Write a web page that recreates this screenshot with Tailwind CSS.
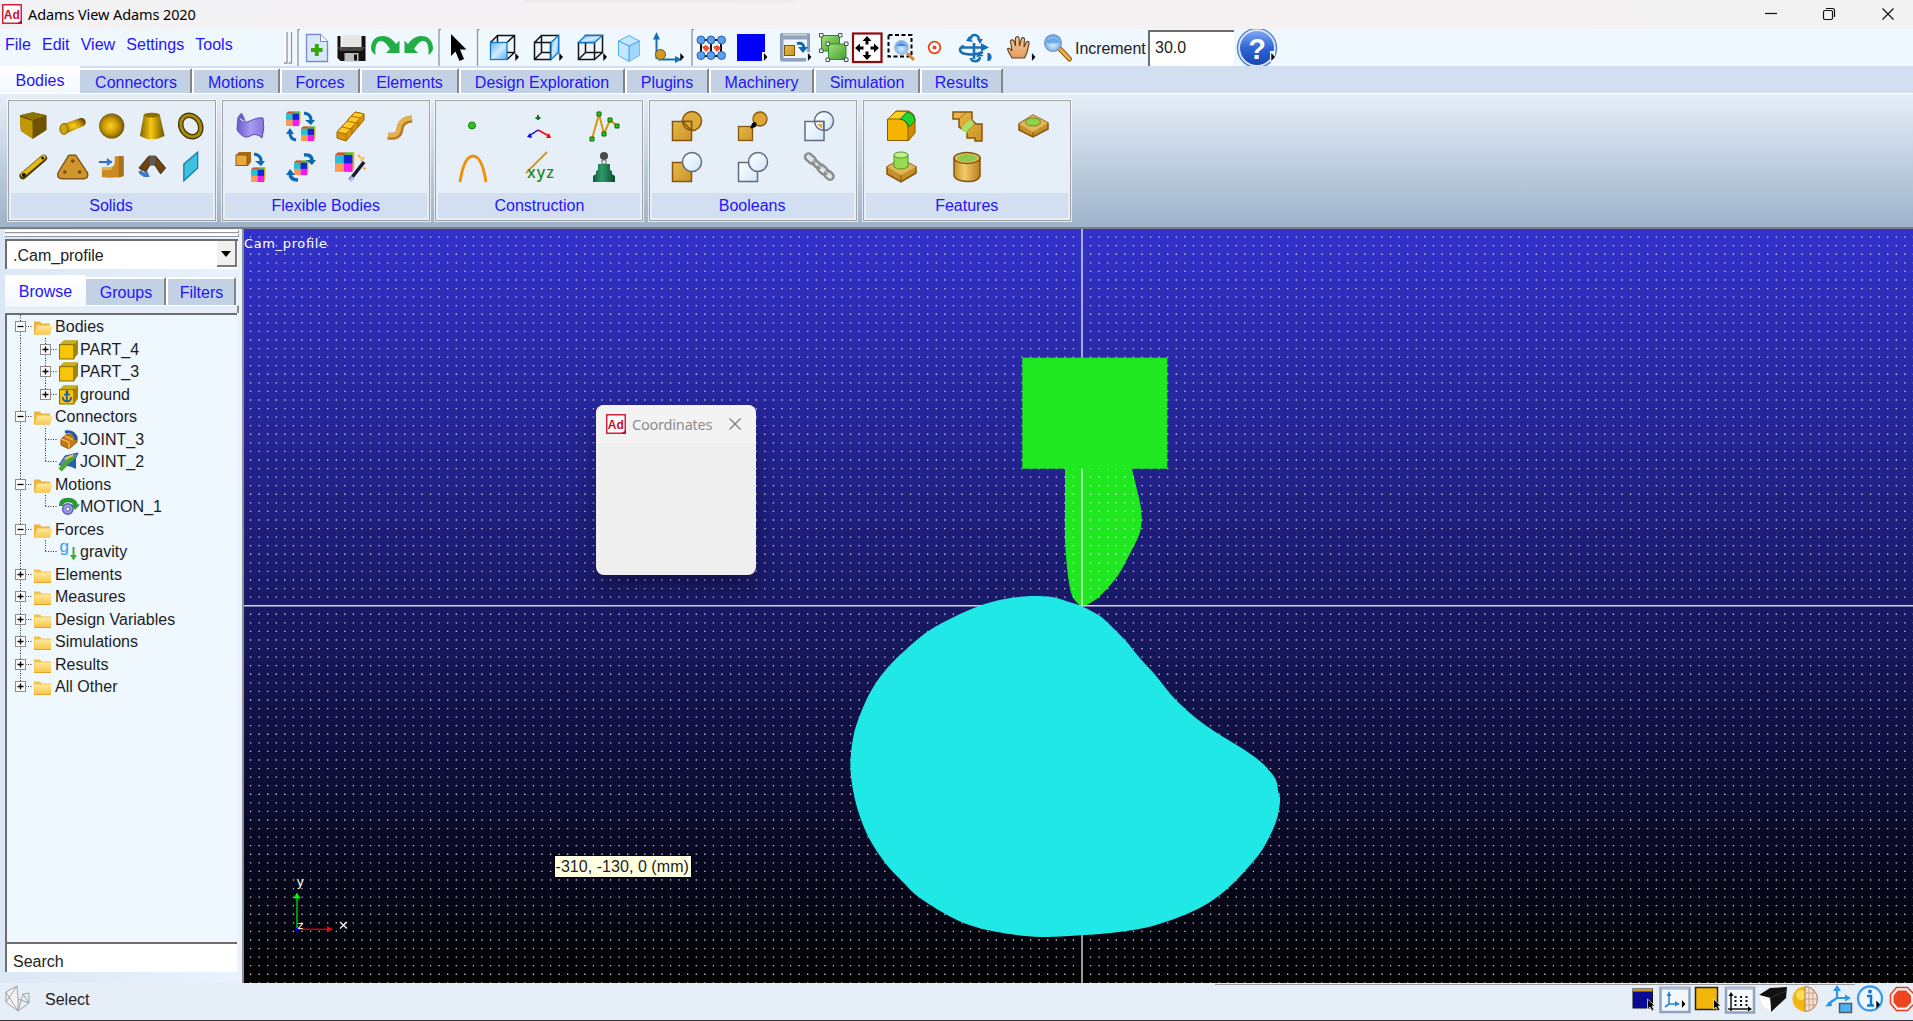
<!DOCTYPE html>
<html lang="en">
<head>
<meta charset="utf-8">
<title>Adams View Adams 2020</title>
<script src="https://cdn.jsdelivr.net/npm/@tailwindcss/browser@4"></script>
</head>
<body class="w-[1913px] h-[1021px] overflow-hidden flex flex-col bg-[#e6eef8] text-[16px] leading-[20px] text-black font-['Liberation_Sans',Arial,sans-serif]">

<!-- shared gradients and symbols -->
<svg class="absolute w-0 h-0" aria-hidden="true">
  <defs>
    <radialGradient id="gold" cx=".45" cy=".5" r=".6"><stop offset="0" stop-color="#ffd21a"/><stop offset=".5" stop-color="#c99a06"/><stop offset="1" stop-color="#5c4700"/></radialGradient>
    <linearGradient id="goldH"><stop offset="0" stop-color="#7d6000"/><stop offset=".45" stop-color="#f7c810"/><stop offset="1" stop-color="#6b5200"/></linearGradient>
    <linearGradient id="tan" x1="0" y1="0" x2="1" y2="1"><stop offset="0" stop-color="#e9b94a"/><stop offset="1" stop-color="#c99425"/></linearGradient>
    <linearGradient id="tanH"><stop offset="0" stop-color="#c98f2a"/><stop offset=".4" stop-color="#f0ca6a"/><stop offset="1" stop-color="#b97f1f"/></linearGradient>
    <linearGradient id="pale" x1="0" y1="0" x2="1" y2="1"><stop offset="0" stop-color="#fff"/><stop offset="1" stop-color="#cfe6fb"/></linearGradient>
    <linearGradient id="sky" x1="0" y1="0" x2="1" y2="1"><stop offset="0" stop-color="#5fb4f5"/><stop offset=".5" stop-color="#d3ecff"/><stop offset="1" stop-color="#5fb4f5"/></linearGradient>
    <linearGradient id="purple"><stop offset="0" stop-color="#6a5bc8"/><stop offset=".5" stop-color="#a79bf0"/><stop offset="1" stop-color="#8577dc"/></linearGradient>
    <linearGradient id="green" x1="0" y1="0" x2="1" y2="1"><stop offset="0" stop-color="#a6e07c"/><stop offset="1" stop-color="#3f9e2c"/></linearGradient>
    <linearGradient id="bottle"><stop offset="0" stop-color="#0c5a38"/><stop offset=".4" stop-color="#2f9a6a"/><stop offset="1" stop-color="#0a4a2e"/></linearGradient>
    <linearGradient id="help" x1="0" y1="0" x2="0" y2="1"><stop offset="0" stop-color="#7ea6f2"/><stop offset=".5" stop-color="#2f66d8"/><stop offset="1" stop-color="#1746ae"/></linearGradient>
    <radialGradient id="lens" cx=".5" cy=".6" r=".6"><stop offset="0" stop-color="#d8f0ff"/><stop offset="1" stop-color="#5f9fe8"/></radialGradient>
    <linearGradient id="skin" x1="0" y1="0" x2="0" y2="1"><stop offset="0" stop-color="#f7d2a4"/><stop offset="1" stop-color="#e09a5a"/></linearGradient>
    <linearGradient id="folderFill" x1="0" y1="0" x2="0" y2="1"><stop offset="0" stop-color="#ffe9a0"/><stop offset="1" stop-color="#f8c84a"/></linearGradient>
    <symbol id="adlogo" viewBox="0 0 20 20"><rect x=".75" y=".75" width="18.5" height="18.5" fill="#fff" stroke="#d0213f" stroke-width="1.5"/><path d="M14 20l6-4v4z" fill="#c8102e"/><text x="9.8" y="14.6" text-anchor="middle" font-family="Liberation Sans, sans-serif" font-weight="700" font-size="12" fill="#c8102e">Ad</text></symbol>
    <symbol id="folder" viewBox="0 0 20 16"><path d="M1 2h6l1.500 2H18v11H1z" fill="#f2c14a"/><path d="M1.500 5h16.500v9.500H1.500z" fill="url(#folderFill)"/><path d="M1 15h17" stroke="#e0a52e"/></symbol>
    <symbol id="folderOpen" viewBox="0 0 20 16"><path d="M1 2h6l1.500 2H17v11H1z" fill="#e9b440"/><path d="M4 6h16l-3 9H1.500z" fill="url(#folderFill)"/></symbol>
    <symbol id="plus" viewBox="0 0 11 11"><rect x=".5" y=".5" width="10" height="10" fill="#fdfdfd" stroke="#8c8c8c"/><path d="M2.500 5.500h6M5.500 2.500v6" stroke="#000" stroke-width="1.300"/></symbol>
    <symbol id="minus" viewBox="0 0 11 11"><rect x=".5" y=".5" width="10" height="10" fill="#fdfdfd" stroke="#8c8c8c"/><path d="M2.500 5.500h6" stroke="#000" stroke-width="1.300"/></symbol>
    <symbol id="cube" viewBox="0 0 20 20"><path d="M1 5l4-4h14v13l-4 5z" fill="#a88500"/><path d="M1 5l4-4h14l-4 4z" fill="#c9b018"/><rect x="1" y="5" width="14" height="14" fill="#f5c60a" stroke="#8d6a00"/></symbol>
    <symbol id="mesh" viewBox="0 0 16 16"><path d="M1 3l2-3h12.500v12l-2 3.500z" fill="#d4c020"/><rect x="0" y="2" width="7" height="7" fill="#26c2cf"/><rect x="7" y="2" width="7" height="7" fill="#1424d8"/><rect x="0" y="9" width="7" height="6.500" fill="#ff9a52"/><rect x="7" y="9" width="7" height="6.500" fill="#f21af0"/><path d="M0 2l2-2h7l-2 2z" fill="#e0453a"/><path d="M9 0h6l-1.500 2H7z" fill="#4ab83c"/></symbol>
    <symbol id="drop" viewBox="0 0 4 8"><path d="M.3 0v8L4 4z" fill="#000"/></symbol>
  </defs>
</svg>

<!-- title bar -->
<header class="h-[29px] shrink-0 flex items-center justify-between bg-linear-to-r from-[#f2f2f4] via-[#f5f1f2] to-[#f2f2f3] pb-px">
  <div class="flex items-center pl-[2px] gap-[6px]">
    <svg class="w-5 h-5"><use href="#adlogo"/></svg>
    <span class="font-['Noto_Sans',sans-serif] text-[14.500px] tracking-[-0.1px] whitespace-nowrap">Adams View Adams 2020</span>
  </div>
  <div class="w-[270px] h-[2px] self-start bg-[#e8e5e6] rounded-b-lg -ml-[270px] mr-[350px] blur-[1px]"></div>
  <svg class="w-[170px] h-7" viewBox="1743 0 170 28" fill="none" stroke="#111" stroke-width="1.200"><path d="M1765 13.500h12"/><rect x="1823.500" y="10.500" width="9" height="9" rx="1.500"/><path d="M1826 8.500h6.500q2 0 2 2V17"/><path d="M1882.500 8.500l11 11M1893.500 8.500l-11 11"/></svg>
</header>

<!-- menu and main toolbar -->
<div class="h-[37px] shrink-0 flex bg-[#eff7ff]">
  <nav class="w-[280px] flex gap-[11.200px] pl-[5px] pt-[6px] text-[#2414fb] whitespace-nowrap">
    <span>File</span><span>Edit</span><span>View</span><span>Settings</span><span>Tools</span>
  </nav>
  <svg class="w-[20px] h-[37px]" viewBox="280 29 20 37"><path d="M284.500 32h3v31h-3zM289.500 32h3v31h-3z" fill="#fff"/><path d="M287 32v31h-3M291.500 32v31h-3" stroke="#8f969c" fill="none" stroke-width="1.300"/><path d="M298 66V29.500h2" stroke="#8f969c" stroke-width="1.300" fill="none"/></svg>
  <!-- new -->
  <svg class="w-[34px] h-[37px]" viewBox="300 29 34 37"><path d="M306.500 34.500h14l7 7v20h-21z" fill="#d8e8fb" stroke="#7c87cc" stroke-width="1.300"/><path d="M320.500 34.500v7h7" fill="#fff" stroke="#7c87cc"/><path d="M316.800 44v12M311 50h11.500" stroke="#35a80d" stroke-width="4"/></svg>
  <!-- save -->
  <svg class="w-[34px] h-[37px]" viewBox="334 29 34 37"><path d="M337.500 36h3v12h21V36h4v25h-25l-3-3z" fill="#111"/><rect x="342" y="35" width="19" height="14" fill="#e6e6e6"/><path d="M338 47h27l-3 4h-22z" fill="#444"/><rect x="344.500" y="53" width="14" height="8.500" fill="#bdbdbd"/><rect x="354" y="54.500" width="3" height="6" fill="#111"/></svg>
  <!-- redo / undo -->
  <svg class="w-[34px] h-[37px]" viewBox="368 29 34 37"><path d="M371 47c1-8 6-11 12-11 6 0 10 4 13 8l3.500-3.500V53H386l4-4c-3-5-6-8-9-8-5 0-6 6-5.500 14-3-2-5-5-4.500-8z" fill="#22ad45"/></svg>
  <svg class="w-[36px] h-[37px]" viewBox="402 29 36 37"><path d="M433 47c-1-8-6-11-12-11-6 0-10 4-13 8l-3.500-3.500V53H418l-4-4c3-5 6-8 9-8 5 0 6 6 5.500 14 3-2 5-5 4.500-8z" fill="#22ad45"/></svg>
  <svg class="w-[42px] h-[37px]" viewBox="438 29 42 37"><path d="M439 66V29.500h2M477.500 66V29.500h2" stroke="#8f969c" stroke-width="1.300" fill="none"/><path d="M451 34l15.500 15.500h-6.500l4 9.500-4.500 2-4-9.500-4.500 4.500z" fill="#000"/></svg>
  <!-- view orientation cubes -->
  <svg class="w-[44px] h-[37px]" viewBox="480 29 44 37"><path d="M497.500 35.500h17v17h-17zM490.500 42.500l7-7M507 42.500l7.500-7M507 59.500l7.500-7M490.500 59.500l7-7" fill="none" stroke="#111" stroke-width="1.500"/><rect x="490.500" y="42.500" width="16.500" height="17" fill="url(#sky)" stroke="#1478c8" stroke-width="1.300"/><use href="#drop" x="515" y="53" width="4" height="8"/></svg>
  <svg class="w-[44px] h-[37px]" viewBox="524 29 44 37"><path d="M541.500 35.500h17v17h-17zM534.500 42.500h16v17h-16zM534.500 42.500l7-7M534.500 59.500l7-7" fill="none" stroke="#111" stroke-width="1.500"/><path d="M551 42.500l7.500-7v17l-7.500 7z" fill="url(#sky)" stroke="#1478c8" stroke-width="1.300"/><use href="#drop" x="559" y="53" width="4" height="8"/></svg>
  <svg class="w-[44px] h-[37px]" viewBox="568 29 44 37"><path d="M585.500 35.500h17v17h-17zM578.500 42.500h16v17h-16zM578.500 59.500l7-7M594.500 59.500l8-7" fill="none" stroke="#111" stroke-width="1.500"/><path d="M578.500 42.500l7-7h17l-8 7z" fill="url(#sky)" stroke="#1478c8" stroke-width="1.300"/><use href="#drop" x="603" y="53" width="4" height="8"/></svg>
  <svg class="w-[36px] h-[37px]" viewBox="612 29 36 37"><path d="M629 35.500l10.500 5.500v14.500l-10.500 6-10.500-6V41z" fill="#c4e6ff" stroke="#4eb0f0"/><path d="M629 46l10.500-5v14.500l-10.500 6z" fill="#9ad2fb" opacity=".8"/><path d="M618.500 41l10.500 5 10.500-5M629 46v15" fill="none" stroke="#2f9ce8"/></svg>
  <svg class="w-[40px] h-[37px]" viewBox="648 29 40 37"><path d="M656.500 59V37M658 59.500h20" stroke="#1470b8" stroke-width="2" fill="none"/><path d="M653 39.500l3.500-7.500 3.500 7.500zM675 56l7 3.500-7 3.500z" fill="#1470b8"/><circle cx="660.500" cy="54.500" r="5" fill="#d19a25" stroke="#7a5510"/><use href="#drop" x="680" y="53" width="4" height="8"/></svg>
  <!-- working grid -->
  <svg class="w-[46px] h-[37px]" viewBox="688 29 46 37"><path d="M692 66V29.500h2" stroke="#8f969c" stroke-width="1.300" fill="none"/><path d="M701 40h20M701 56h20M701 40v16M711 40v16M721 40v16" stroke="#111" stroke-width="2" /><g fill="#5b9ff0" stroke="#2460b0"><circle cx="701" cy="40" r="4"/><circle cx="711" cy="40" r="4"/><circle cx="721.500" cy="40" r="4"/><circle cx="701" cy="55.500" r="4"/><circle cx="711" cy="55.500" r="4"/><circle cx="721.500" cy="55.500" r="4"/></g><path d="M702 47l4-2 4 3-4 4zM713 47l4-2 4 3-4 4z" fill="#f4502a"/></svg>
  <svg class="w-[40px] h-[37px]" viewBox="734 29 40 37"><rect x="737" y="34" width="28" height="27" fill="#00f"/><path d="M762 52h5v10h-5z" fill="#eff7ff"/><use href="#drop" x="763.500" y="53" width="4" height="8"/></svg>
  <svg class="w-[42px] h-[37px]" viewBox="774 29 42 37"><rect x="780.500" y="33.500" width="29" height="27.500" rx="1.500" fill="#8fa3be" stroke="#8496b0"/><path d="M783 34.500h24" stroke="#c8d4e4" stroke-width="2"/><rect x="783.500" y="39.500" width="23.500" height="18.500" fill="#f2f6fa"/><rect x="784.500" y="45.500" width="10" height="10" fill="url(#tan)" stroke="#7a5510"/><path d="M797 43.500c5-1 7 1 7 5" stroke="#0f68b0" stroke-width="3" fill="none"/><path d="M798 47h10l-5 6z" fill="#0f68b0"/><path d="M806 52h5v10h-5z" fill="#eff7ff"/><use href="#drop" x="807.500" y="53" width="4" height="8"/></svg>
  <svg class="w-[34px] h-[37px]" viewBox="816 29 34 37"><rect x="821.500" y="35.500" width="18" height="15.500" fill="url(#green)" stroke="#2f8a22"/><rect x="828.500" y="44" width="17.500" height="15.500" fill="url(#green)" stroke="#2f8a22"/><g fill="#fff" stroke="#4a5058"><path d="M819.500 33.500h3.500v3.500h-3.500zM838.500 33.500h3.500v3.500h-3.500zM819.500 49h3.500v3.500h-3.500zM826 42h3.500v3.500h-3.500zM844.500 42h3.500v3.500h-3.500zM826 58h3.500v3.500h-3.500zM844.500 58h3.500v3.500h-3.500z"/></g></svg>
  <svg class="w-[34px] h-[37px]" viewBox="850 29 34 37"><rect x="853" y="33.500" width="28.500" height="28.500" fill="#fff" stroke="#900a0a" stroke-width="2.200"/><path d="M867 39v5.500M867 51.500v5.500M858 48h5.500M870.500 48h5.500" stroke="#000" stroke-width="3"/><path d="M862.500 41l4.500-5 4.500 5zM862.500 55l4.500 5 4.500-5zM860 43.500l-5 4.500 5 4.500zM874 43.500l5 4.500-5 4.500z" fill="#000"/></svg>
  <!-- zoom box -->
  <svg class="w-[36px] h-[37px]" viewBox="884 29 36 37"><rect x="888.500" y="35" width="23" height="21.500" fill="none" stroke="#000" stroke-width="2" stroke-dasharray="4 2.500"/><path d="M907 53l7 7" stroke="#d08a2a" stroke-width="3"/><circle cx="901.500" cy="47.500" r="6.800" fill="url(#lens)" stroke="#a8bcd4" stroke-width="1.300"/><path d="M896 46q5-5 11 0z" fill="#3f87e8"/></svg>
  <svg class="w-[32px] h-[37px]" viewBox="920 29 32 37"><circle cx="934.500" cy="47.500" r="5.800" fill="#fff" stroke="#f04018" stroke-width="1.800"/><circle cx="934.500" cy="47.500" r="2" fill="#f04018"/></svg>
  <svg class="w-[48px] h-[37px]" viewBox="952 29 48 37" fill="none" stroke="#1a6fb4" stroke-width="2.600"><path d="M964 46c-6 2-5 7 2 8 6 1 13 0 17-2M962 47.500h21M974 43v16M971 39c-1-5 8-6 8 1M971 58c0 4 8 5 9-1"/><path d="M981 43l8 4.500-8 4zM969 36l-3 5 7 1zM977 39l3 5 3-5zM979 53l-3 4 8-1z" fill="#1a6fb4" stroke="none"/><use href="#drop" x="987.500" y="53" width="4" height="8"/></svg>
  <svg class="w-[40px] h-[37px]" viewBox="1000 29 40 37"><path d="M1012 58c-2-4-4-6-4.500-9 1.500-1.500 3 0 4.500 2l-1.500-10c1-2 3-1 3.500 0l1.500 5 0-8c1-2 3-1.500 3.500 0l.5 8 2-7.500c1-1.500 3-1 3 .5l-.5 8 2.500-5c1-1 3-.5 2.500 1.500l-2 9-2.500 5.500z" fill="url(#skin)" stroke="#6a4420" stroke-width="1.200"/><use href="#drop" x="1031.500" y="53" width="4" height="8"/></svg>
  <svg class="w-[34px] h-[37px]" viewBox="1040 29 34 37"><path d="M1060 49l9.500 10" stroke="#8a5a20" stroke-width="5" stroke-linecap="round"/><path d="M1060.500 49.500l9 9.500" stroke="#f0b040" stroke-width="3" stroke-linecap="round"/><circle cx="1053" cy="43" r="8.300" fill="url(#lens)" stroke="#7d9fc4" stroke-width="1.600"/><path d="M1046 42q7-7 14 0-7 3-14 0z" fill="#3f87e8" opacity=".55"/></svg>
  <span class="w-[74px] pt-[9.500px] pl-px text-[#222] whitespace-nowrap tracking-[-0.05px]">Increment</span>
  <div class="w-[86px] h-[35.500px] mt-px bg-white border-t-2 border-l-2 border-[#6d6d6d] pl-[5px] pt-[6px] text-[#222]">30.0</div>
  <svg class="w-[50px] h-[37px]" viewBox="1234 29 50 37"><circle cx="1257" cy="48" r="19.500" fill="#dfe9fb" stroke="#5b82cc" stroke-width="1.500"/><circle cx="1257" cy="48" r="17" fill="url(#help)"/><text x="1257" y="58.500" text-anchor="middle" font-family="Liberation Sans, sans-serif" font-weight="700" font-size="29" fill="#fff">?</text><path d="M1270 51h5v11h-5z" fill="#eff7ff"/><use href="#drop" x="1271" y="53" width="4" height="8"/></svg>
</div>

<!-- ribbon tabs -->
<nav class="h-[28px] shrink-0 flex items-end bg-[#d1dff0] border-b border-white text-[#2414fb] text-center whitespace-nowrap">
  <div class="w-20 h-full bg-linear-to-b from-white to-[#f4f8ff] leading-[30px]">Bodies</div>
  <div class="w-[112px] h-[25px] bg-[#c2d1e3] border-t-2 border-white border-r-2 border-r-[#858585] leading-[25px] pl-[2px]">Connectors</div>
  <div class="w-[88px] h-[25px] bg-[#c2d1e3] border-t-2 border-l-2 border-white border-r-2 border-r-[#858585] leading-[25px]">Motions</div>
  <div class="w-[80px] h-[25px] bg-[#c2d1e3] border-t-2 border-l-2 border-white border-r-2 border-r-[#858585] leading-[25px]">Forces</div>
  <div class="w-[99px] h-[25px] bg-[#c2d1e3] border-t-2 border-l-2 border-white border-r-2 border-r-[#858585] leading-[25px]">Elements</div>
  <div class="w-[166px] h-[25px] bg-[#c2d1e3] border-t-2 border-l-2 border-white border-r-2 border-r-[#858585] leading-[25px]">Design Exploration</div>
  <div class="w-[84px] h-[25px] bg-[#c2d1e3] border-t-2 border-l-2 border-white border-r-2 border-r-[#858585] leading-[25px]">Plugins</div>
  <div class="w-[105px] h-[25px] bg-[#c2d1e3] border-t-2 border-l-2 border-white border-r-2 border-r-[#858585] leading-[25px]">Machinery</div>
  <div class="w-[106px] h-[25px] bg-[#c2d1e3] border-t-2 border-l-2 border-white border-r-2 border-r-[#858585] leading-[25px]">Simulation</div>
  <div class="w-[83px] h-[25px] bg-[#c2d1e3] border-t-2 border-l-2 border-white border-r-2 border-r-[#858585] leading-[25px]">Results</div>
</nav>

<!-- ribbon -->
<section class="h-[135px] shrink-0 flex gap-[5.700px] pl-[8px] pt-[6px] bg-linear-to-b from-[#e6eef8] to-[#9db3cb] border-b-2 border-[#7d7d7d] text-[#2414fb]">
  <div class="w-[208px] h-[121px] border border-[#a3a3a3] outline outline-white/70 bg-[#e6eef8] px-[2px] pb-[2px] flex flex-col justify-between">
    <div class="grid grid-cols-[repeat(5,39.500px)] auto-rows-[41px] pl-[2px] pt-[5px]">
      <svg class="w-[39.500px] h-10" viewBox="-20 -20 40 40"><path d="M-13-11L0-14l14 3v15L0 13-12 5z" fill="#6a5200"/><path d="M-13-9L0-5v18L-12 5z" fill="#c09804"/><path d="M0-5l13-4-1 14L0 13z" fill="#6e5400"/><path d="M-13-11L0-14l14 3L0-6z" fill="#8e7206"/></svg>
      <svg class="w-[39.500px] h-10" viewBox="-20 -20 40 40"><path d="M-10-2l18-6c5-1 7 6 3 8L-8 8z" fill="url(#gold)"/><ellipse cx="-9" cy="3" rx="4" ry="5.500" fill="#d0a80e" stroke="#7d6000"/></svg>
      <svg class="w-[39.500px] h-10" viewBox="-20 -20 40 40"><circle r="12.500" fill="url(#gold)" stroke="#6b5200" stroke-width=".6"/></svg>
      <svg class="w-[39.500px] h-10" viewBox="-20 -20 40 40"><path d="M-8-12Q0-15 8-12l5 22Q0 17-12 10z" fill="url(#goldH)"/><ellipse cy="-11" rx="8" ry="2.500" fill="#8e7000"/></svg>
      <svg class="w-[39.500px] h-10" viewBox="-20 -20 40 40"><ellipse rx="9.500" ry="11.500" transform="rotate(-35)" fill="none" stroke="#3f3200" stroke-width="5.500"/><ellipse rx="9.500" ry="11.500" transform="rotate(-35)" fill="none" stroke="#a98a0c" stroke-width="3"/></svg>
      <svg class="w-[39.500px] h-10" viewBox="-20 -20 40 40"><path d="M-10 9L11-9" stroke="#4a3a00" stroke-width="7" stroke-linecap="round"/><path d="M-10 8L11-10" stroke="#e6b812" stroke-width="4.500" stroke-linecap="round"/><circle cx="-9" cy="8" r="2" fill="#111"/><circle cx="10" cy="-9" r="1.500" fill="#111"/></svg>
      <svg class="w-[39.500px] h-10" viewBox="-20 -20 40 40"><path d="M-4-12h7l12 18q1 6-4 6h-22q-5 0-4-6z" fill="#d0962c" stroke="#7e5818" stroke-width="1.500"/><g fill="#6e4a10"><circle cy="-6" r="1.800"/><circle cx="-8" cy="5" r="1.800"/><circle cx="7" cy="5" r="1.800"/></g></svg>
      <svg class="w-[39.500px] h-10" viewBox="-20 -20 40 40"><path d="M-10 0h9q4 0 4-6v-5h9V9q-10 3-22 1z" fill="#c98a22"/><path d="M7-11h5V9l-5 2z" fill="#a8701a"/><path d="M-10 0h11l-2 3h-9z" fill="#e7b048"/><path d="M-13-5H0" stroke="#2c66b4" stroke-width="2"/><path d="M-5-9l6 4-6 4z" fill="#3a78c8"/></svg>
      <svg class="w-[39.500px] h-10" viewBox="-20 -20 40 40"><path d="M-3-11h7L14 1l-5 6-6-9h-5l-4 7-7-4z" fill="#6b4412" stroke="#45290a"/><path d="M-3-11h7l-1 9h-5z" fill="#5b5a58"/><path d="M-12 4q2 5 8 3" stroke="#3a78c8" stroke-width="3.500" fill="none"/><path d="M-5 3l3 7-7 0z" fill="#3a78c8"/></svg>
      <svg class="w-[39.500px] h-10" viewBox="-20 -20 40 40"><path d="M-7-3L7-15V1L-7 14z" fill="#3fc0e0" stroke="#0c7fae" stroke-width="1.300"/></svg>
    </div>
    <div class="h-[25px] bg-[#d2dff0] text-center leading-[26px] pr-[2px]">Solids</div>
  </div>

  <div class="w-[208px] h-[121px] border border-[#a3a3a3] outline outline-white/70 bg-[#e6eef8] px-[2px] pb-[2px] flex flex-col justify-between">
    <div class="grid grid-cols-[repeat(4,49px)] auto-rows-[41px] pl-[3px] pt-[5px]">
      <svg class="w-[49px] h-10" viewBox="-22 -20 49 40"><path d="M-12-9q4 8 12 4t13-3q2 10-1 20-6-6-12-2T-13 4z" fill="url(#purple)" stroke="#5a4ab8"/><path d="M-12-9q2-4 4-4 3 6 4 9z" fill="#6a5bc8"/></svg>
      <svg class="w-[49px] h-10" viewBox="-24 -20 49 40"><use href="#mesh" x="-15" y="-15" width="15" height="16"/><use href="#mesh" x="0" y="0" width="15" height="16"/><path d="M3-13q7 1 7 7M-5 14q-6-1-6-7" fill="none" stroke="#0a68b8" stroke-width="3"/><path d="M4-6h10l-4 5zM-15 8h8l-4-6z" fill="#0a68b8"/></svg>
      <svg class="w-[49px] h-10" viewBox="-25 -20 49 40"><path d="M-14 6L4-14l9 2v6L-5 15l-9-3z" fill="#d99408" stroke="#9c6200"/><path d="M-14 6L4-14l9 2L-5 8z" fill="#ffc928" stroke="#a86e00"/><path d="M-9 1l9 2M-4-5l9 2M0-10l9 2M-5 8v6M1 2v6M7-5v6" stroke="#a86e00" fill="none"/></svg>
      <svg class="w-[49px] h-10" viewBox="-26 -20 49 40"><path d="M-13 10Q-2 12-1 3T11-7" fill="none" stroke="#b07a1e" stroke-width="7"/><path d="M-13 9Q-3 11-2 2T11-8" fill="none" stroke="#e6b04c" stroke-width="4.500"/></svg>
      <svg class="w-[49px] h-10" viewBox="-22 -20 49 40"><path d="M-14-12l3-3H1V-5l-3 4h-12z" fill="#a86a10"/><rect x="-14" y="-12" width="11" height="10.500" fill="#e7a93a" stroke="#8d5a10"/><use href="#mesh" x="1" y="0" width="15" height="16"/><path d="M4-13q7 1 7 7" fill="none" stroke="#0a68b8" stroke-width="3"/><path d="M5-6h10l-4 5z" fill="#0a68b8"/></svg>
      <svg class="w-[49px] h-10" viewBox="-24 -20 49 40"><use href="#mesh" x="-7" y="-7" width="15" height="16"/><path d="M3-12q8-1 8 6M-3 13q-8 0-8-7" fill="none" stroke="#0a68b8" stroke-width="3.500"/><path d="M5-7h10l-4 5zM-15 8h9l-5-6z" fill="#0a68b8"/></svg>
      <svg class="w-[49px] h-10" viewBox="-25 -20 49 40"><use href="#mesh" x="-16" y="-15" width="20" height="21"/><path d="M-1 13L13-5" stroke="#1a1a2c" stroke-width="3.500"/><path d="M-1 14l3-4" stroke="#b8bce8" stroke-width="3.500"/><path d="M7-12l3 3M13-10l-3 4M12 1l3 1" stroke="#ffb428" stroke-width="2"/></svg>
    </div>
    <div class="h-[25px] bg-[#d2dff0] text-center leading-[26px]">Flexible Bodies</div>
  </div>

  <div class="w-[208px] h-[121px] border border-[#a3a3a3] outline outline-white/70 bg-[#e6eef8] px-[2px] pb-[2px] flex flex-col justify-between">
    <div class="grid grid-cols-[repeat(3,66px)] auto-rows-[41px] pl-[1px] pt-[5px]">
      <svg class="w-[66px] h-10" viewBox="-33 -20 66 40"><circle cx="0" cy="-.5" r="3.500" fill="#2cc41c" stroke="#0c7a0c"/></svg>
      <svg class="w-[66px] h-10" viewBox="-33 -20 66 40"><path d="M0-11v5M-2.500-8h5" stroke="#0a7a1c" stroke-width="2"/><path d="M0 4l11 6" stroke="#f00" stroke-width="1.500"/><path d="M0 4l-9 6" stroke="#00f" stroke-width="1.500"/><path d="M13 12l-5 0 3-5z" fill="#f00"/><path d="M-11 11l5 1-2-5z" fill="#00f"/></svg>
      <svg class="w-[66px] h-10" viewBox="-33 -20 66 40"><path d="M-12 13L-5-12 0 8l6-14 7 6" fill="none" stroke="#d39a10" stroke-width="2"/><g fill="#2cc41c" stroke="#0c6a0c"><path d="M-14 11h4v4h-4zM-7-14h4v4h-4zM-2 6h4v4h-4zM4-8h4v4h-4zM11-2h4v4h-4z"/></g></svg>
      <svg class="w-[66px] h-10" viewBox="-33 -20 66 40"><path d="M-12 15Q-8-11 1-11 10-11 14 15" fill="none" stroke="#f09208" stroke-width="3"/></svg>
      <svg class="w-[66px] h-10" viewBox="-33 -20 66 40"><path d="M-12 6L9-15" stroke="#d39a10" stroke-width="2"/><text x="-11" y="11" font-family="Noto Sans, sans-serif" font-size="16" font-weight="500" fill="#1f8a1f" textLength="27">xyz</text></svg>
      <svg class="w-[66px] h-10" viewBox="-33 -20 66 40"><circle cy="-11" r="4" fill="#4a4a4a"/><path d="M-2-7h4v4h-4z" fill="#eee" stroke="#666"/><path d="M-6-3H6v6l2 1v3l3 2v6h-22V9l3-2V4l2-1z" fill="url(#bottle)"/></svg>
    </div>
    <div class="h-[25px] bg-[#d2dff0] text-center leading-[26px]">Construction</div>
  </div>

  <div class="w-[208px] h-[121px] border border-[#a3a3a3] outline outline-white/70 bg-[#e6eef8] px-[2px] pb-[2px] flex flex-col justify-between">
    <div class="grid grid-cols-[repeat(3,66px)] auto-rows-[41px] pl-[2px] pt-[5px]">
      <svg class="w-[66px] h-10" viewBox="-33 -20 66 40" stroke="#86560e" stroke-width="1.500"><circle cx="5" cy="-5" r="9.500" fill="#e0aa3a"/><rect x="-14.500" y="-4.500" width="19" height="19" fill="url(#tan)"/><path d="M-4.500-4.500a9.500 9.500 0 0 0 9 9z M-4.500-4.500h9v9" fill="#e0aa3a"/></svg>
      <svg class="w-[66px] h-10" viewBox="-33 -20 66 40" stroke="#86560e" stroke-width="1.300"><circle cx="7" cy="-7" r="7" fill="#dda535"/><rect x="-14.500" y=".5" width="14" height="14" fill="url(#tan)"/><path d="M-2 2l5-5" stroke="#000" stroke-width="2.500"/><circle cx="1" cy="-1" r="1.800" fill="#000" stroke="#000"/></svg>
      <svg class="w-[66px] h-10" viewBox="-33 -20 66 40" stroke="#606c7c" stroke-width="1.500"><circle cx="5" cy="-5" r="9.500" fill="url(#pale)"/><rect x="-14" y="-4.500" width="19" height="19" fill="url(#pale)"/><path d="M-4.500-4.500h9v9a9.500 9.500 0 0 1-9-9z" fill="#fff"/><path d="M-2-2h5v5z" fill="#e8a830" stroke="none"/></svg>
      <svg class="w-[66px] h-10" viewBox="-33 -20 66 40"><rect x="-14.500" y="-4.500" width="19" height="19" fill="url(#tan)" stroke="#86560e" stroke-width="1.500"/><circle cx="5" cy="-5" r="9.500" fill="url(#pale)" stroke="#606c7c" stroke-width="1.500"/></svg>
      <svg class="w-[66px] h-10" viewBox="-33 -20 66 40" stroke="#606c7c" stroke-width="1.500"><rect x="-14.500" y="-4.500" width="19" height="19" fill="url(#pale)"/><circle cx="5" cy="-5" r="9.500" fill="url(#pale)"/></svg>
      <svg class="w-[66px] h-10" viewBox="-33 -20 66 40" fill="none" stroke="#8d8d8d" stroke-width="2.500"><g transform="rotate(42)"><rect x="-18" y="-4" width="12" height="7" rx="3.500"/><rect x="-8" y="-3" width="9" height="5" rx="2.500"/><rect x="-1" y="-4" width="11" height="7" rx="3.500"/><rect x="8" y="-4" width="10" height="7" rx="3.500"/><path d="M-16-1h32" stroke="#d6d6d6" stroke-width="1"/></g></svg>
    </div>
    <div class="h-[25px] bg-[#d2dff0] text-center leading-[26px] pr-[2px]">Booleans</div>
  </div>

  <div class="w-[208px] h-[121px] border border-[#a3a3a3] outline outline-white/70 bg-[#e6eef8] px-[2px] pb-[2px] flex flex-col justify-between">
    <div class="grid grid-cols-[repeat(3,66px)] auto-rows-[41px] pl-[2px] pt-[5px]">
      <svg class="w-[66px] h-10" viewBox="-33 -20 66 40"><path d="M-13-7l8-8H8q6 3 6 8V7l-7 8z" fill="#d08c00" stroke="#8a5a00"/><path d="M-13-7l8-7H6L-1-7z" fill="#ffd21a"/><path d="M-13.500-7H-1Q7-6 7 4v10.500h-20.500z" fill="#f5b400" stroke="#8a5a00"/><path d="M-1-7l7-7q8 2 8 9L8 1Q6-6-1-7z" fill="#22d431" stroke="#0f7a18"/></svg>
      <svg class="w-[66px] h-10" viewBox="-33 -20 66 40"><path d="M-14-14H5v8l4 4h6v17H8v-3H0V6L-8 1v-8h-6z" fill="url(#tan)" stroke="#86560e" stroke-width="1.500"/><path d="M-6 2L4-7l4 6L-1 8z" fill="#a6e264"/><path d="M-8-7l8-7M0 6l8-8" stroke="#a87418"/></svg>
      <svg class="w-[66px] h-10" viewBox="-33 -20 66 40"><path d="M-14-2L0-11 15-3v6L0 11-14 4z" fill="#c58f2c" stroke="#86560e" stroke-width="1.500"/><path d="M-14-2L0-11 15-3 0 6z" fill="#e2b658"/><path d="M0 6v5" stroke="#86560e"/><ellipse cx="0" cy="-4" rx="7.500" ry="4" fill="#8ed448" stroke="#6e8a20"/></svg>
      <svg class="w-[66px] h-10" viewBox="-33 -20 66 40"><path d="M-14 0L0-8 15 0v6L0 15-14 7z" fill="#c58f2c" stroke="#86560e" stroke-width="1.500"/><path d="M-14 0L0-8 15 0 0 8z" fill="#e2b658"/><path d="M0 8v7" stroke="#86560e"/><path d="M-7-12v12q7 4 14 0v-12z" fill="#96dc50" stroke="#4f9a20"/><ellipse cy="-12" rx="7" ry="3" fill="#c2f08c" stroke="#4f9a20"/></svg>
      <svg class="w-[66px] h-10" viewBox="-33 -20 66 40"><path d="M-13-9V9q2 5 13 5.500T13 9V-9z" fill="url(#tanH)" stroke="#86560e" stroke-width="1.500"/><ellipse cy="-9" rx="13" ry="5.500" fill="#e8c060" stroke="#86560e" stroke-width="1.500"/><ellipse cy="-9" rx="10" ry="3.800" fill="#8fc84a"/></svg>
    </div>
    <div class="h-[25px] bg-[#d2dff0] text-center leading-[26px]">Features</div>
  </div>
</section>

<!-- main area -->
<main class="h-[754px] shrink-0 flex">
  <aside class="w-[244px] h-full flex flex-col bg-linear-to-r from-[#dce7f5] to-[#e9f3ff] border-r-2 border-[#8d8d8d] pl-[5px]">
    <div class="w-[234px] h-[10px] flex flex-col gap-px pt-px">
      <div class="h-[3px] bg-white border-r border-b border-[#8f969c]"></div>
      <div class="h-[3px] bg-white border-r border-b border-[#8f969c]"></div>
    </div>
    <div class="w-[233px] h-[30px] shrink-0 bg-white border-t-2 border-l-2 border-[#6d6d6d] flex justify-between pl-[6px] text-[#222] leading-[29px]">
      <span>.Cam_profile</span>
      <div class="w-[20px] h-[26px] bg-[#f0f0f0] border-r-2 border-b-2 border-[#7a7a7a] flex justify-center pt-[10px] mr-px"><svg class="w-[10px] h-[6px]" viewBox="0 0 10 6"><path d="M0 0h10L5 6z"/></svg></div>
    </div>
    <div class="w-[233px] h-[36px] shrink-0 flex items-end text-[#2414fb] text-center">
      <div class="w-[81px] h-[30px] bg-linear-to-b from-white to-[#f4f8ff] leading-[33px]">Browse</div>
      <div class="w-[80px] h-[28px] bg-[#c2d1e3] border-t-2 border-white border-r-2 border-r-[#858585] leading-[28px] pl-[2px]">Groups</div>
      <div class="w-[70px] h-[28px] bg-[#c2d1e3] border-t-2 border-l-2 border-white border-r-2 border-r-[#858585] leading-[28px] pl-px">Filters</div>
    </div>
    <div class="w-[234px] h-[8px] shrink-0 border-t border-white border-r-2 border-r-[#8d8d8d] bg-[#e6eef8]"></div>
    <div id="tree" class="w-[232px] h-[629px] shrink-0 bg-[#eff7ff] border-t-2 border-l-2 border-[#6d6d6d] text-[#1d1d1d] overflow-hidden"></div>
    <div class="w-[232px] h-[30px] shrink-0 bg-white border-t-2 border-l-2 border-[#6d6d6d] pl-[6px] pt-[2px] leading-[32px] text-[#222]">Search</div>
  </aside>

  <div class="relative w-[1669px] h-full overflow-hidden">
    <svg class="w-[1669px] h-[754px]" viewBox="244 229 1669 754">
      <defs><linearGradient id="sceneBg" x1="0" y1="0" x2="0" y2="1"><stop offset="0" stop-color="#3232cc"/><stop offset="1" stop-color="#000"/></linearGradient></defs>
      <rect x="244" y="229" width="1669" height="754" fill="url(#sceneBg)"/>
      <path id="follower" transform="translate(1000 340) scale(.33333)" fill="#20e820"/>
      <path id="gridDots" fill="#fff" fill-opacity=".78"/>
      <path d="M244 605.700h1669M1082 229v754" stroke="#fff" stroke-opacity=".8" stroke-width="1.500" fill="none"/>
      <rect x="1022.300" y="357.700" width="145" height="111" fill="#20e820"/>
      <path id="cam" transform="translate(840 560) scale(.33333)" fill="#20e8e6"/>
      <!-- triad -->
      <path d="M297 929V897" stroke="#00c000" stroke-width="1.500"/><path d="M293.500 898.500l3.500-6 3.500 6z" fill="#0f0"/>
      <path d="M297 929.300h31" stroke="#d00000" stroke-width="1.500"/><path d="M327 926l6 3.300-6 2.700z" fill="#f00"/><rect x="295.500" y="928" width="3" height="3" fill="#00f"/>
      <path d="M340 922l7 6.500M347 922l-7 6.500" stroke="#fff" stroke-width="1.200"/>
      <g fill="#fff" font-family="DejaVu Sans, sans-serif" font-size="13"><text x="296.500" y="886">y</text><text x="297.500" y="928.500" font-size="11">z</text><text x="244" y="248" textLength="83">Cam_profile</text></g>
    </svg>

    <div class="absolute left-[352px] top-[176px] w-[160px] h-[170px] rounded-[8px] bg-[#efefef] overflow-hidden shadow-[0_14px_24px_rgba(0,0,0,.3)]">
      <div class="h-[38px] bg-[#f3f3f3] flex items-center pl-[10px]">
        <svg class="w-5 h-5"><use href="#adlogo"/></svg>
        <span class="w-[90px] pl-[6px] pb-px font-['Noto_Sans',sans-serif] text-[14.500px] text-[#8c8c8c] tracking-[-0.2px]">Coordinates</span>
        <svg class="ml-[13px] w-[12px] h-[12px]" viewBox="0 0 12 12"><path d="M.5.5l11 11M11.500.5l-11 11" stroke="#777" stroke-width="1.100"/></svg>
      </div>
    </div>
    <div class="absolute left-[309.500px] top-[626px] w-[138px] h-[23px] bg-[#ffffe1] border border-black pl-px text-[#222] leading-[22px] tracking-[0.05px] whitespace-nowrap">-310, -130, 0 (mm)</div>
  </div>
</main>

<!-- status bar -->
<footer class="grow flex justify-between bg-[#e6eef8] border-b border-[#333] text-[#222]">
  <div class="flex items-start pl-[5px]">
    <svg class="w-[26px] h-[30px] mt-[2px]" viewBox="5 985 26 30" fill="#f4f4f4" stroke="#9a9a9a" stroke-width=".9"><path d="M6 992l11-6 1 13v12L6 1002z"/><path d="M18 1011l11-8V993l-6 1-5 17M6 992l12 19M6 1002l11-16M18 999l11 4M23 994l6 9" fill="none"/></svg>
    <span class="pt-[7px] pl-[14px]">Select</span>
  </div>
  <svg class="w-[713px] h-[37px]" viewBox="1200 983 713 37">
    <path d="M1215 984.500h640" stroke="#9a9a9a"/>
    <rect x="1633" y="989" width="19.500" height="19" fill="#0a0a96" stroke="#111"/><rect x="1633" y="989" width="19.500" height="2.500" fill="#d09a10"/><path d="M1647.500 999v10l2.500-2 2 4 2-1-2-4h3z" fill="#000" stroke="#fff" stroke-width=".7"/>
    <rect x="1660.500" y="988" width="29" height="24" fill="#f2f7fc" stroke="#8ea2c0" stroke-width="2.500"/><path d="M1661 988h28" stroke="#aebcd2" stroke-width="3"/><path d="M1669 1004v-9M1669 1004h8M1669 1004l-4 3" stroke="#2a86d0" stroke-width="1.600"/><path d="M1666.500 996l2.500-5 2.500 5zM1675 1001l5 3-5 2.500z" fill="#2a86d0"/><use href="#drop" x="1681.500" y="1000" width="4" height="8"/>
    <rect x="1695.500" y="987.500" width="22" height="22" fill="#f0b60a" stroke="#222" stroke-width="1.500"/><path d="M1713.500 999v10l2.500-2 2 4 2-1-2-4h3z" fill="#000" stroke="#fff" stroke-width=".7"/>
    <rect x="1726" y="988" width="28" height="24.500" fill="#f6f9fc" stroke="#8ea2c0" stroke-width="2.500"/><path d="M1726 988h28" stroke="#aebcd2" stroke-width="3"/><path d="M1731 994v17M1728 1009h21" stroke="#111" stroke-width="1.500"/><path d="M1735.500 996v11M1741 996v11M1746.500 996v11" stroke="#111" stroke-width="2" stroke-dasharray="2 2"/><path d="M1728.500 996l2.500-4 2.500 4zM1748 1006.500l4 2.500-4 2.500z"/>
    <path d="M1759 995l11-7 17-1-1 11-15 14-1-14z" fill="#111"/><path d="M1759 995l11 3 1 14-8-6z" fill="#fff"/><path d="M1770 998l16-7" stroke="#333"/>
    <circle cx="1805" cy="999" r="12.500" fill="#f2b712"/><circle cx="1801" cy="995" r="5" fill="#ffdc55"/><path d="M1805 986.500a12.500 12.500 0 0 1 0 25z" fill="#f0e2d8" stroke="#b07a50"/><path d="M1809 987v24M1813 989v20M1805 993h11M1805 999h12.500M1805 1005h11" stroke="#c09478" stroke-width=".8"/>
    <path d="M1837 998v-8M1837 998h10M1837 998l-9 6" stroke="#2a96ec" stroke-width="2.200"/><path d="M1833 991l4-6 4 6zM1845 994.500l6 3.500-6 3.500zM1831 1000.500l-6 6 7-.5z" fill="#2a96ec"/><rect x="1839.500" y="1003.500" width="12" height="9" fill="#48b4f4" stroke="#555c64" stroke-width="1.500"/>
    <circle cx="1870" cy="998.500" r="12" fill="#eef7ff" stroke="#3a9cf0" stroke-width="2.300"/><circle cx="1870" cy="991.500" r="2" fill="#1478d0"/><path d="M1867 996h4v9M1867 1005.500h7" stroke="#1478d0" stroke-width="2.500" fill="none"/><use href="#drop" x="1876" y="1000" width="4" height="9"/>
    <path d="M1896.500 987.500h11l7 7v9l-7 7h-11l-6-7v-9z" fill="#f4f4f4" stroke="#e8401c" stroke-width="1.500"/><path d="M1898 990.500h8l5 5v7l-5 5h-8l-4.500-5v-7z" fill="#ee4422"/>
  </svg>
</footer>

<script>
  // Working grid: one small square per grid node, spaced evenly around the origin.
  const pitch = 60 / 7, ox = 1082, oy = 605.7, s = 1.3;
  let d = '';
  for (let j = -43; j <= 44; j++) {
    if (j === 0) continue;
    for (let i = -97; i <= 97; i++) {
      if (i === 0) continue;
      const x = ox + i * pitch - s / 2, y = oy + j * pitch - s / 2;
      d += `M${x.toFixed(2)} ${y.toFixed(2)}h${s}v${s}h-${s}z`;
    }
  }
  document.getElementById('gridDots').setAttribute('d', d);

  // Catmull-Rom curve through the given profile points.
  function spline(list, closed) {
    const p = list.split(' ').map(t => t.split(',').map(Number)), n = p.length;
    const at = i => closed ? p[(i + n) % n] : p[Math.max(0, Math.min(n - 1, i))];
    let out = `M${p[0]}`;
    for (let i = 0; i < (closed ? n : n - 1); i++) {
      const a = at(i - 1), b = at(i), c = at(i + 1), e = at(i + 2);
      out += `C${b[0] + (c[0] - a[0]) / 6} ${b[1] + (c[1] - a[1]) / 6} ${c[0] - (e[0] - b[0]) / 6} ${c[1] - (e[1] - b[1]) / 6} ${c[0]} ${c[1]}`;
    }
    return out + 'z';
  }
  document.getElementById('cam').setAttribute('d', spline('490,118 560,109 610,109 650,114 690,127 730,141 775,165 800,185 855,240 900,295 950,350 1000,412 1060,468 1110,505 1150,531 1200,561 1262,605 1305,655 1315,695 1320,722 1308,785 1268,868 1210,938 1155,992 1090,1038 1020,1070 940,1097 860,1113 770,1123 720,1126 626,1131 545,1127 460,1114 390,1096 320,1064 235,1010 185,962 135,908 90,840 60,770 40,695 31,615 40,530 60,465 90,398 135,332 205,262 270,210 340,172 415,139', true));
  document.getElementById('follower').setAttribute('d', spline('195,380 195,490 195,600 201,680 209,740 219,772 235,792 245,797 265,792 300,768 350,712 385,650 415,590 424,555 424,515 415,465 394,380', false));

  // Model tree rows: [level, label, expander, icon, last child]
  const rows = [
    [0, 'Bodies', 'minus', 'folderOpen'], [1, 'PART_4', 'plus', 'cube'], [1, 'PART_3', 'plus', 'cube'], [1, 'ground', 'plus', 'ground', true],
    [0, 'Connectors', 'minus', 'folderOpen'], [1, 'JOINT_3', '', 'joint3'], [1, 'JOINT_2', '', 'joint2', true],
    [0, 'Motions', 'minus', 'folderOpen'], [1, 'MOTION_1', '', 'motion', true],
    [0, 'Forces', 'minus', 'folderOpen'], [1, 'gravity', '', 'gravity', true],
    [0, 'Elements', 'plus', 'folder'], [0, 'Measures', 'plus', 'folder'], [0, 'Design Variables', 'plus', 'folder'],
    [0, 'Simulations', 'plus', 'folder'], [0, 'Results', 'plus', 'folder'], [0, 'All Other', 'plus', 'folder', true]
  ];
  const art = {
    cube: '<use href="#cube" x="51.500" y="1.500" width="20.500" height="20.500"/>',
    ground: '<use href="#cube" x="51.500" y="1.500" width="20.500" height="20.500"/><path d="M59.800 9v9M57 11.500h6M55.500 14q1 4.500 4.500 4.500t4.500-4.500" fill="none" stroke="#1a58a8" stroke-width="1.700"/><circle cx="60" cy="9" r="1.400" fill="#1a58a8"/>',
    joint3: '<path d="M54 11l6-5 10 2v6l-8 7-8-4z" fill="#c47a14" stroke="#8d5208"/><path d="M54 11l8 3v7M58 8l8 4" stroke="#f0b050" fill="none" stroke-width="1.500"/><path d="M58 4q10-2 11 8" stroke="#1a58a8" stroke-width="3" fill="none"/>',
    joint2: '<path d="M52 15l6-9 13-3-6 13z" fill="#5a8ac0" stroke="#2a5484"/><path d="M53 20l13-13" stroke="#4aa82a" stroke-width="4.500"/><path d="M60 15l9 4v-11z" fill="#2a5cb0"/><path d="M58 9l8-4" stroke="#e8c840" stroke-width="2"/>',
    motion: '<path d="M54 11q0-6 7-6t8 6" stroke="#2a9a30" stroke-width="4.500" fill="none"/><path d="M64 9.500h9l-5 5.500z" fill="#2a9a30"/><circle cx="60.800" cy="14" r="5.200" fill="#9aa0e0" stroke="#5a5eb8" stroke-width="1.500"/><circle cx="60.800" cy="14" r="2" fill="#fff" stroke="#5a5eb8"/>',
    gravity: '<text x="52.500" y="12" font-size="17" font-family="Liberation Sans, sans-serif" fill="#28a4f4">g</text><path d="M66.500 7v10" stroke="#3cae2c" stroke-width="2"/><path d="M63 15h7l-3.500 5.500z" fill="#3cae2c"/>'
  };
  document.getElementById('tree').innerHTML = rows.map(([lv, label, exp, icon, last]) => {
    const x = lv ? 38.5 : 13.5, dot = 'stroke="#333" stroke-dasharray="1 1.5"';
    let g = `<path d="M13.500 0v${lv === 0 && last ? 11 : 23}" ${dot}/>`;
    if (lv) g += `<path d="M38.500 0v${last ? 11 : 23}" ${dot}/>`;
    g += `<path d="M${x} 11.500h11" ${dot}/>`;
    if (exp) g += `<use href="#${exp}" x="${x - 5.5}" y="6" width="11" height="11"/>`;
    g += icon.startsWith('folder') ? `<use href="#${icon}" x="26" y="4.500" width="20" height="16"/>` : art[icon];
    const w = lv ? 'w-[73px]' : 'w-[48px]', vw = lv ? 73 : 48;
    return `<div class="h-[22.500px] flex whitespace-nowrap leading-[23px]"><svg class="${w} h-[22.500px] shrink-0 overflow-visible" viewBox="0 0 ${vw} 22.500">${g}</svg><span class="tracking-[0.03px]">${label}</span></div>`;
  }).join('');
</script>
</body>
</html>
